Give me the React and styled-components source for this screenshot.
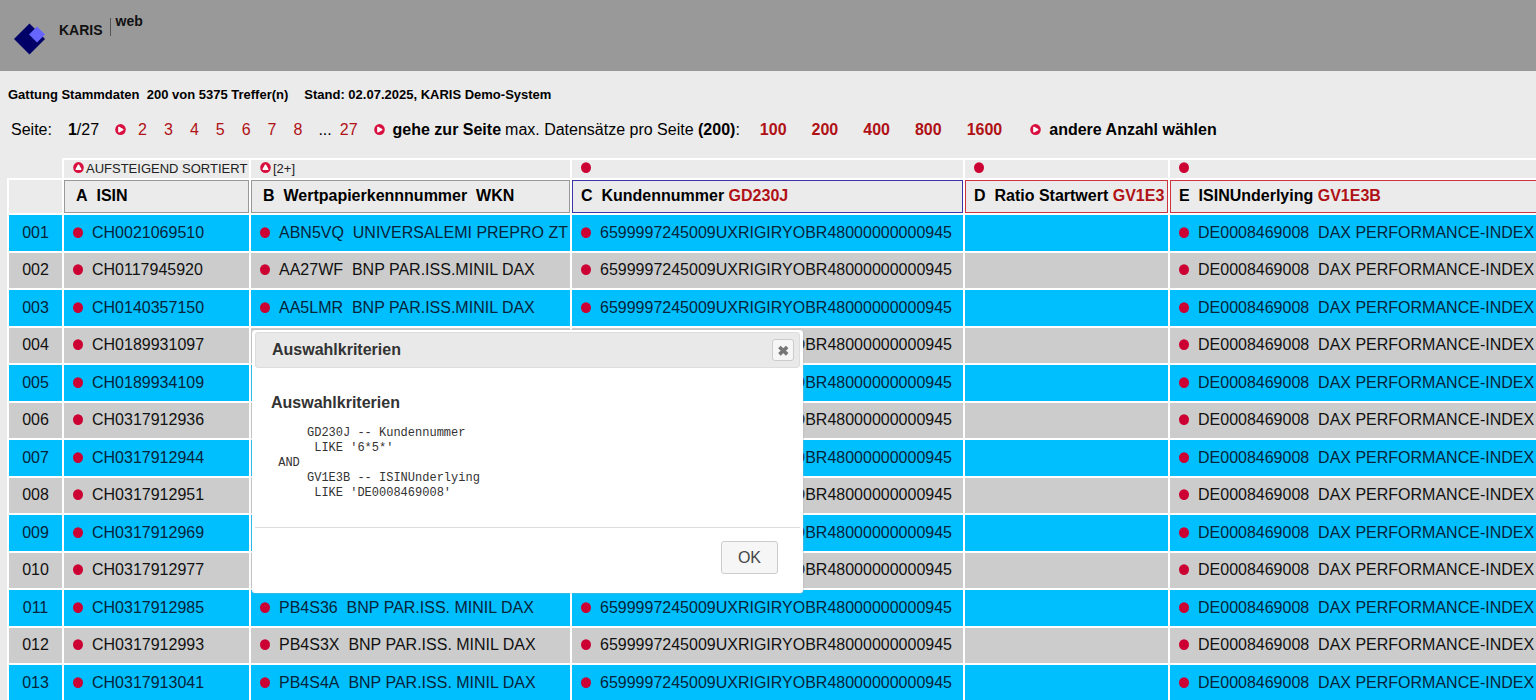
import { useState } from "react";
import styled, { createGlobalStyle } from "styled-components";

/* Data ---------------------------*/
const pages = [2, 3, 4, 5, 6, 7, 8];
const pageSizes = [100, 200, 400, 800, 1600];

const columns = [
    { letter: "A", title: "ISIN", tone: "#999999", sort: "AUFSTEIGEND SORTIERT", width: 187 },
    { letter: "B", title: "Wertpapierkennnummer\u00a0 WKN", tone: "#999999", sort: "[2+]", width: 321 },
    { letter: "C", title: "Kundennummer", code: "GD230J", tone: "#3a35a8", width: 393 },
    { letter: "D", title: "Ratio Startwert", code: "GV1E3", tone: "#cc3340", width: 205 },
    { letter: "E", title: "ISINUnderlying", code: "GV1E3B", tone: "#cc3340" },
];

const customer = "6599997245009UXRIGIRYOBR48000000000945";
const underlying = "DE0008469008\u00a0 DAX PERFORMANCE-INDEX";

const rows = [
    { nr: "001", isin: "CH0021069510", wkn: "ABN5VQ\u00a0 UNIVERSALEMI PREPRO ZT" },
    { nr: "002", isin: "CH0117945920", wkn: "AA27WF\u00a0 BNP PAR.ISS.MINIL DAX" },
    { nr: "003", isin: "CH0140357150", wkn: "AA5LMR\u00a0 BNP PAR.ISS.MINIL DAX" },
    { nr: "004", isin: "CH0189931097" },
    { nr: "005", isin: "CH0189934109" },
    { nr: "006", isin: "CH0317912936" },
    { nr: "007", isin: "CH0317912944" },
    { nr: "008", isin: "CH0317912951" },
    { nr: "009", isin: "CH0317912969" },
    { nr: "010", isin: "CH0317912977" },
    { nr: "011", isin: "CH0317912985", wkn: "PB4S36\u00a0 BNP PAR.ISS. MINIL DAX" },
    { nr: "012", isin: "CH0317912993", wkn: "PB4S3X\u00a0 BNP PAR.ISS. MINIL DAX" },
    { nr: "013", isin: "CH0317913041", wkn: "PB4S4A\u00a0 BNP PAR.ISS. MINIL DAX" },
];

const criteria = `     GD230J -- Kundennummer
      LIKE '6*5*'
 AND
     GV1E3B -- ISINUnderlying
      LIKE 'DE0008469008'`;

/* Icons ---------------------------*/
const Logo = () => (
    <svg width="32" height="32" viewBox="0 0 32 32" aria-hidden="true">
        <path d="M15.5 .5 31 16 15.5 31.5 0 16Z" fill="#000066" />
        <path d="M23 3.5 31 11.5 23 19.5 15 11.5Z" fill="#6666ff" />
    </svg>
);

const Dot = () => (
    <svg width="11" height="12" viewBox="0 0 11 12" aria-hidden="true">
        <ellipse cx="5" cy="5.6" rx="5" ry="5.4" fill="#cc0033" />
    </svg>
);

const Arrow = ({ up }) => (
    <svg width="11" height="12" viewBox="0 0 11 12" aria-hidden="true">
        <ellipse cx="5.5" cy="5.6" rx="5.3" ry="5.5" fill="#d8103f" />
        <path
            d={up ? "M5.5 3.2 7.8 7.3H3.2Z" : "M3.9 3.4V7.8L7.8 5.6Z"}
            fill="#fff"
            stroke="#fff"
            strokeWidth="1.4"
            strokeLinejoin="round"
        />
    </svg>
);

const Cross = () => (
    <svg width="14" height="14" viewBox="0 0 14 14" aria-hidden="true">
        <path d="M3.4 4 11.2 11.4M11.2 4 3.4 11.4" stroke="#777" strokeWidth="3.6" />
    </svg>
);

const Entry = ({ children }) => (
    <EntryStyled>
        <Dot />
        {children}
    </EntryStyled>
);

const CriteriaDialog = ({ onClose }) => (
    <DialogStyled role="dialog" aria-labelledby="dialog-title">
        <TitleBar>
            <span id="dialog-title">Auswahlkriterien</span>
            <CloseButton type="button" aria-label="Close" onClick={onClose}>
                <Cross />
            </CloseButton>
        </TitleBar>
        <DialogBody>
            <h3>Auswahlkriterien</h3>
            <pre>{criteria}</pre>
        </DialogBody>
        <DialogFooter>
            <OkButton type="button" onClick={onClose}>
                OK
            </OkButton>
        </DialogFooter>
    </DialogStyled>
);

const App = () => {
    const [open, openUpdate] = useState(true);
    const close = () => openUpdate(false);

    return (
        <Page>
            <GlobalStyle />

            {/* Header */}
            <Header>
                <Logo />
                <Brand>
                    <span>KARIS</span>
                    <sup>web</sup>
                </Brand>
            </Header>

            {/* Result info */}
            <Info>
                <span>Gattung Stammdaten&nbsp; 200 von 5375 Treffer(n)</span>
                <span>Stand: 02.07.2025, KARIS Demo-System</span>
            </Info>

            {/* Pagination */}
            <Pager>
                <PageLabel>Seite:</PageLabel>
                <PageCount>
                    <b>1</b>/27
                </PageCount>
                <Arrow />
                <PageLinks>
                    {pages.map((page) => (
                        <PageLink key={page} href={`#${page}`}>
                            {page}
                        </PageLink>
                    ))}
                </PageLinks>
                <LastPage>
                    ... <PageLink href="#27">27</PageLink>
                </LastPage>
                <ActionLink href="#goto">
                    <Arrow />
                    gehe zur Seite
                </ActionLink>
                <SizeLabel>
                    max. Datensätze pro Seite <b>(200)</b>:
                </SizeLabel>
                <SizeLinks>
                    {pageSizes.map((size) => (
                        <PageLink key={size} href={`#size-${size}`} $bold>
                            {size}
                        </PageLink>
                    ))}
                </SizeLinks>
                <ActionLink href="#size">
                    <Arrow />
                    andere Anzahl wählen
                </ActionLink>
            </Pager>

            {/* Table */}
            <TableWrap>
                <Table>
                    <colgroup>
                        <Col $width={55} />
                        {columns.map((c) => (
                            <Col key={c.letter} $width={c.width} />
                        ))}
                    </colgroup>
                    <thead>
                        <tr>
                            <EmptyCell />
                            {columns.map((c) => (
                                <SortCell key={c.letter}>
                                    <SortMark>
                                        {c.sort ? <Arrow up /> : <Dot />}
                                        {c.sort}
                                    </SortMark>
                                </SortCell>
                            ))}
                        </tr>
                        <tr>
                            <HeadCell />
                            {columns.map((c) => (
                                <HeadCell key={c.letter} scope="col" $tone={c.tone} $wide={Boolean(c.sort)}>
                                    {c.letter}&nbsp; {c.title} {c.code && <Code>{c.code}</Code>}
                                </HeadCell>
                            ))}
                        </tr>
                    </thead>
                    <tbody>
                        {rows.map((row) => (
                            <Row key={row.nr}>
                                <NumberCell>{row.nr}</NumberCell>
                                <Cell>
                                    <Entry>{row.isin}</Entry>
                                </Cell>
                                <Cell>{row.wkn && <Entry>{row.wkn}</Entry>}</Cell>
                                <Cell>
                                    <Entry>{customer}</Entry>
                                </Cell>
                                <Cell />
                                <Cell>
                                    <Entry>{underlying}</Entry>
                                </Cell>
                            </Row>
                        ))}
                    </tbody>
                </Table>
            </TableWrap>

            {open && <CriteriaDialog onClose={close} />}
        </Page>
    );
};

export default App;

const GlobalStyle = createGlobalStyle`
    body {
        margin: 0;
        background-color: #ebebeb;
        color: #000;
        font-family: "Liberation Sans", Arial, sans-serif;
        font-size: 16px;
        line-height: 20px;
    }

    svg {
        flex: none;
        display: block;
    }
`;

const Page = styled.div`
    position: relative;
    overflow: hidden;
`;

const Header = styled.header`
    display: flex;
    align-items: flex-start;
    gap: 13px;
    box-sizing: border-box;
    padding: 16px 14px;
    background-color: #999999;

    > svg {
        margin: 7px 0 0;
    }
`;

const Brand = styled.div`
    display: flex;
    align-items: flex-start;
    font-size: 14px;
    font-weight: bold;
    line-height: 16px;
    color: #111;

    span {
        padding: 6px 7px 0 0;
    }

    sup {
        height: 18px;
        margin-top: 2px;
        padding-left: 5px;
        border-left: 1px solid #555;
        font-size: 14px;
        line-height: 6px;
        vertical-align: top;
    }
`;

const Info = styled.div`
    display: flex;
    gap: 16px;
    padding: 14px 8px 0;
    font-size: 13px;
    font-weight: bold;
`;

const Pager = styled.nav`
    display: flex;
    align-items: center;
    padding: 15px 11px 0;
    white-space: nowrap;
`;

const PageLabel = styled.span`
    margin-right: 16px;
`;

const PageCount = styled.span`
    margin-right: 16px;
`;

const PageLinks = styled.span`
    display: flex;
    gap: 17px;
    margin-left: 12px;
`;

const LastPage = styled.span`
    display: flex;
    gap: 8px;
    margin: 0 16px;
`;

const PageLink = styled.a`
    color: #b01116;
    font-weight: ${(props) => (props.$bold ? "bold" : "normal")};
    text-decoration: none;

    &:hover {
        text-decoration: underline;
    }
`;

const ActionLink = styled.a`
    display: flex;
    align-items: center;
    gap: 8px;
    color: #000;
    font-weight: bold;
    text-decoration: none;
`;

const SizeLabel = styled.span`
    margin-left: 4px;
`;

const SizeLinks = styled.span`
    display: flex;
    gap: 25px;
    margin: 0 28px 0 20px;
`;

const TableWrap = styled.div`
    padding: 18px 0 0 7px;
`;

/* the last column runs out past the window edge */
const Table = styled.table`
    width: calc(100% + 8px);
    table-layout: fixed;
    border-collapse: collapse;
    white-space: nowrap;

    th,
    td {
        padding: 0 0 1px;
        text-align: left;
    }
`;

const Col = styled.col`
    width: ${(props) => (props.$width ? `${props.$width}px` : "auto")};
`;

const EmptyCell = styled.td`
    border: none;
`;

const SortCell = styled.td`
    height: 17px;
    border: 2px solid #fff;
    color: #222;
    font-size: 13px;
    line-height: 17px;
`;

const SortMark = styled.div`
    display: flex;
    align-items: center;
    gap: 2px;
    padding-left: 9px;
    line-height: 17px;

    svg {
        margin-bottom: 1px;
    }
`;

const HeadCell = styled.th`
    height: 32px;
    border: 2px solid #fff;
    box-shadow: ${(props) => (props.$tone ? `inset 0 0 0 1px ${props.$tone}` : "none")};

    && {
        padding-left: ${(props) => (props.$wide ? "12px" : "9px")};
    }
`;

const Code = styled.span`
    color: #b01116;
`;

const Cell = styled.td`
    border: 2px solid #fff;
`;

const NumberCell = styled(Cell)`
    && {
        text-align: center;
    }
`;

const Row = styled.tr`
    height: 38px;
    background-color: #00bfff;
    color: #06243a;

    &:nth-child(even) {
        height: 37px;
        background-color: #cccccc;
        color: #111;
    }
`;

const EntryStyled = styled.div`
    display: flex;
    align-items: center;
    gap: 8px;
    padding-left: 9px;
`;

const DialogStyled = styled.section`
    position: absolute;
    top: 330px;
    left: 252px;
    width: 551px;
    box-sizing: border-box;
    padding: 2px 3px 19px;
    border-radius: 3px;
    background-color: #fff;
    color: #333;
    box-shadow: 0 0 2px #aaa;
`;

const TitleBar = styled.div`
    display: flex;
    align-items: center;
    justify-content: space-between;
    padding: 6px 5px 6px 16px;
    border: 1px solid #ddd;
    border-radius: 3px;
    background-color: #e9e9e9;
    font-weight: bold;
`;

const CloseButton = styled.button`
    display: flex;
    align-items: center;
    justify-content: center;
    width: 22px;
    height: 22px;
    padding: 0;
    border: 1px solid #ccc;
    border-radius: 3px;
    background-color: #f6f6f6;
    cursor: pointer;
`;

const DialogBody = styled.div`
    padding: 25px 16px 26px;

    h3 {
        margin: 0 0 13px;
        font-size: 16px;
        line-height: 20px;
    }

    pre {
        margin: 0;
        font-family: "Liberation Mono", Consolas, monospace;
        font-size: 12px;
        line-height: 15px;
    }
`;

const DialogFooter = styled.div`
    display: flex;
    justify-content: flex-end;
    padding: 13px 22px 0;
    border-top: 1px solid #ddd;
`;

const OkButton = styled.button`
    padding: 6px 16px;
    border: 1px solid #ccc;
    border-radius: 3px;
    background-color: #f6f6f6;
    color: #454545;
    font-family: inherit;
    font-size: 16px;
    line-height: 19px;
    cursor: pointer;
`;
